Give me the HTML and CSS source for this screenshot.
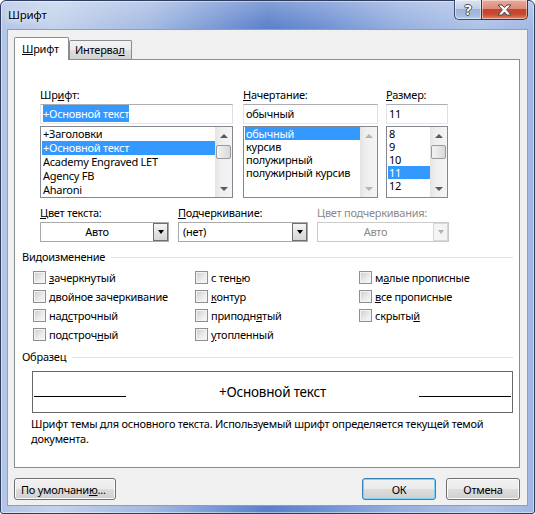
FILE: index.html
```html
<!DOCTYPE html>
<html lang="ru">
<head>
  <meta charset="UTF-8">
  <title>Шрифт</title>
  <link rel="stylesheet" href="styles.css">
</head>
<body>
  <div class="window">
    <div class="titlebar">
      <span class="title">Шрифт</span>
      <div class="caption-buttons">
        <div class="cap-btn help"><span class="help-glyph">?</span></div>
        <div class="cap-btn close">
          <svg width="15" height="12" viewBox="0 0 15 12">
            <polygon points="1,1 5,1 7.5,3.6 10,1 14,1 9.6,5.8 14,11 10,11 7.5,8 5,11 1,11 5.4,5.8" fill="#fff" stroke="#4a4a4a" stroke-width="1" stroke-linejoin="round"/>
          </svg>
        </div>
      </div>
    </div>

    <div class="client">
      <div class="tabs">
        <div class="tab active"><u>Ш</u>рифт</div>
        <div class="tab">Интерва<u>л</u></div>
      </div>

      <div class="panel">
        <!-- font / style / size -->
        <div class="pickers">
          <div class="picker picker-font">
            <label>Шр<u>и</u>фт:</label>
            <div class="field"><span class="sel">+Основной текст</span></div>
            <div class="listbox">
              <ul>
                <li>+Заголовки</li>
                <li class="selected">+Основной текст</li>
                <li>Academy Engraved LET</li>
                <li>Agency FB</li>
                <li>Aharoni</li>
              </ul>
              <div class="scrollbar">
                <div class="sb-btn"><span class="arrow-up"></span></div>
                <div class="thumb"></div>
                <div class="sb-track"></div>
                <div class="sb-btn"><span class="arrow-down"></span></div>
              </div>
            </div>
          </div>

          <div class="picker picker-style">
            <label><u>Н</u>ачертание:</label>
            <div class="field">обычный</div>
            <div class="listbox rows13">
              <ul>
                <li class="selected">обычный</li>
                <li>курсив</li>
                <li>полужирный</li>
                <li>полужирный курсив</li>
              </ul>
              <div class="scrollbar disabled">
                <div class="sb-btn"><span class="arrow-up"></span></div>
                <div class="sb-track"></div>
                <div class="sb-btn"><span class="arrow-down"></span></div>
              </div>
            </div>
          </div>

          <div class="picker picker-size">
            <label><u>Р</u>азмер:</label>
            <div class="field">11</div>
            <div class="listbox rows13">
              <ul>
                <li>8</li>
                <li>9</li>
                <li>10</li>
                <li class="selected">11</li>
                <li>12</li>
              </ul>
              <div class="scrollbar">
                <div class="sb-btn"><span class="arrow-up"></span></div>
                <div class="thumb"></div>
                <div class="sb-track"></div>
                <div class="sb-btn"><span class="arrow-down"></span></div>
              </div>
            </div>
          </div>
        </div>

        <!-- colours -->
        <div class="colors">
          <div>
            <label><u>Ц</u>вет текста:</label>
            <div class="combo">
              <span class="combo-value">Авто</span>
              <span class="combo-btn"><span class="arrow-down"></span></span>
            </div>
          </div>
          <div>
            <label><u>П</u>одчеркивание:</label>
            <div class="combo combo-left">
              <span class="combo-value">(нет)</span>
              <span class="combo-btn"><span class="arrow-down"></span></span>
            </div>
          </div>
          <div class="is-disabled">
            <label>Цвет подчеркивания:</label>
            <div class="combo">
              <span class="combo-value">Авто</span>
              <span class="combo-btn"><span class="arrow-down"></span></span>
            </div>
          </div>
        </div>

        <div class="group-title">Видоизменение</div>
        <div class="effects">
          <div class="check"><span class="box"></span><span><u>з</u>ачеркнутый</span></div>
          <div class="check"><span class="box"></span><span><u>д</u>войное зачеркивание</span></div>
          <div class="check"><span class="box"></span><span>над<u>с</u>трочный</span></div>
          <div class="check"><span class="box"></span><span>подстроч<u>н</u>ый</span></div>
          <div class="check"><span class="box"></span><span>с тен<u>ь</u>ю</span></div>
          <div class="check"><span class="box"></span><span><u>к</u>онтур</span></div>
          <div class="check"><span class="box"></span><span>приподн<u>я</u>тый</span></div>
          <div class="check"><span class="box"></span><span><u>у</u>топленный</span></div>
          <div class="check"><span class="box"></span><span>м<u>а</u>лые прописные</span></div>
          <div class="check"><span class="box"></span><span><u>в</u>се прописные</span></div>
          <div class="check"><span class="box"></span><span>скрыты<u>й</u></span></div>
        </div>

        <div class="group-title sample-title">Образец</div>
        <div class="preview">
          <span class="preview-line"></span>
          <span class="preview-text">+Основной текст</span>
          <span class="preview-line"></span>
        </div>
        <p class="description">Шрифт темы для основного текста. Используемый шрифт определяется текущей темой документа.</p>
      </div>

      <div class="footer">
        <button class="btn btn-wide">По умолчани<u>ю</u>...</button>
        <button class="btn btn-default">ОК</button>
        <button class="btn">Отмена</button>
      </div>
    </div>
  </div>
</body>
</html>
```

FILE: styles.css
```css
* {
  box-sizing: border-box;
}
html, body {
  margin: 0;
  padding: 0;
  background: #fff;
}
body {
  font-family: "Noto Sans", "Segoe UI", sans-serif;
  font-size: 11px;
  letter-spacing: -0.25px;
  color: #000;
}
u {
  text-underline-offset: 1px;
}

/* window frame */
.window {
  width: 535px;
  height: 514px;
  display: flex;
  flex-direction: column;
  border: 1px solid #2f3e5e;
  border-radius: 6px 6px 3px 3px;
  background:
    linear-gradient(to bottom, rgba(255, 255, 255, 0.25), rgba(255, 255, 255, 0) 28px),
    linear-gradient(to right, #b2c5e6 0%, #c3d2ec 10%, #a3b9e2 28%, #7494d3 42%, #5a80c9 50%, #6e90d2 60%, #97b0e0 75%, #afc3e8 90%, #9fb7e3 100%);
  box-shadow: inset 0 0 0 1px rgba(255, 255, 255, 0.45);
}
.titlebar {
  height: 28px;
  display: flex;
  justify-content: space-between;
  align-items: flex-start;
  padding-left: 7px;
}
.title {
  line-height: 28px;
  font-size: 11.5px;
  text-shadow: 0 0 6px rgba(255, 255, 255, 0.9), 0 0 10px rgba(255, 255, 255, 0.7);
}
.caption-buttons {
  display: flex;
  margin: -1px 6px 0 0;
}
.cap-btn {
  height: 20px;
  display: flex;
  align-items: center;
  justify-content: center;
  border: 1px solid #3a4c70;
  border-top: none;
  box-shadow: inset 0 0 0 1px rgba(255, 255, 255, 0.45);
}
.help {
  width: 27px;
  border-right: none;
  border-radius: 0 0 0 5px;
  background: linear-gradient(#dce5f3, #c0cfe8 45%, #9fb3d8 50%, #a9bde3 85%, #bcd0ee);
}
.help-glyph {
  color: #fff;
  font-weight: bold;
  font-size: 14px;
  line-height: 14px;
  text-shadow: -1px 0 #4a4a4a, 1px 0 #4a4a4a, 0 -1px #4a4a4a, 0 1px #4a4a4a;
}
.close {
  width: 47px;
  border-radius: 0 0 5px 0;
  border-color: #5b2a23;
  background: linear-gradient(#eaaa9b, #dc8c7a 45%, #c5452d 50%, #c9492f 75%, #e0866a);
}

/* client area */
.client {
  flex: 1;
  margin: 0 6px 7px;
  display: flex;
  flex-direction: column;
  padding: 7px 7px 5px 6px;
  border: 1px solid #8c9fc2;
  background: #f0f0f0;
}
.tabs {
  height: 22px;
  display: flex;
  align-items: flex-end;
}
.tab {
  width: 63px;
  height: 19px;
  line-height: 17px;
  padding-left: 5px;
  border: 1px solid #898c95;
  border-bottom: none;
  border-radius: 2px 2px 0 0;
  background: linear-gradient(#f3f3f3, #ebebeb 50%, #dedede 50%, #d2d2d2);
}
.tab.active {
  width: 55px;
  height: 23px;
  line-height: 22px;
  padding-left: 7px;
  margin-bottom: -1px;
  position: relative;
  z-index: 1;
  background: #fff;
}
.panel {
  height: 409px;
  padding: 0 6px 0 7px;
  border: 1px solid #898c95;
  background: #fff;
}

/* font pickers */
label {
  display: block;
  line-height: 14px;
  white-space: nowrap;
}
.pickers {
  display: flex;
  margin: 28px 0 0 18px;
}
.picker-font {
  width: 193px;
}
.picker-style {
  width: 135px;
  margin-left: 10px;
}
.picker-size {
  width: 62px;
  margin-left: 8px;
}
.field {
  height: 20px;
  margin-top: 2px;
  padding-left: 2px;
  line-height: 18px;
  border: 1px solid;
  border-color: #abadb3 #dbdfe6 #e3e9ef #e2e3ea;
  background: #fff;
}
.field .sel {
  background: #3399ff;
  color: #fff;
  padding: 1px 0;
}
.listbox {
  height: 72px;
  margin-top: 2px;
  display: flex;
  border: 1px solid #828790;
  background: #fff;
}
.listbox ul {
  flex: 1;
  min-width: 0;
  margin: 0;
  padding: 0 0 0 1px;
  list-style: none;
  overflow: hidden;
}
.listbox li {
  height: 14px;
  line-height: 14px;
  padding-left: 1px;
  white-space: nowrap;
}
.rows13 li {
  height: 13px;
  line-height: 13px;
}
.listbox li.selected {
  background: #3399ff;
  color: #fff;
}
.scrollbar {
  width: 17px;
  flex: none;
  display: flex;
  flex-direction: column;
  background: linear-gradient(to right, #e3e3e3, #eeeeee 30%, #f4f4f4);
}
.sb-btn {
  height: 17px;
  display: flex;
  align-items: center;
  justify-content: center;
}
.sb-track {
  flex: 1;
}
.thumb {
  height: 14px;
  margin: 1px 1px 0;
  border: 1px solid #9a9a9a;
  border-radius: 2px;
  background: linear-gradient(to right, #f4f4f4, #e6e6e6 50%, #d8d8d8);
}
.arrow-up,
.arrow-down {
  width: 0;
  height: 0;
  border-left: 4px solid transparent;
  border-right: 4px solid transparent;
}
.arrow-up {
  border-bottom: 4px solid #5a5a5a;
}
.arrow-down {
  border-top: 4px solid #5a5a5a;
}
.scrollbar.disabled .arrow-up {
  border-bottom-color: #b4b4b4;
}
.scrollbar.disabled .arrow-down {
  border-top-color: #b4b4b4;
}

/* colour combos */
.colors {
  display: grid;
  grid-template-columns: 129px 130px 132px;
  column-gap: 9px;
  margin: 8px 0 0 18px;
}
.combo {
  height: 20px;
  margin-top: 2px;
  display: flex;
  border: 1px solid #a9a9a9;
  background: #fff;
}
.combo-value {
  flex: 1;
  line-height: 18px;
  text-align: center;
}
.combo-left .combo-value {
  text-align: left;
  padding-left: 4px;
}
.combo-btn {
  width: 15px;
  display: flex;
  align-items: center;
  justify-content: center;
  border: 1px solid #6f6f6f;
  background: linear-gradient(#f6f6f6, #e4e4e4 50%, #d6d6d6);
}
.combo-btn .arrow-down {
  border-left-width: 3.5px;
  border-right-width: 3.5px;
  border-top: 4px solid #000;
}
.is-disabled label,
.is-disabled .combo-value {
  color: #8a8a8a;
}
.is-disabled .combo {
  border-color: #cacaca;
}
.is-disabled .combo-btn {
  border-color: #d6d6d6;
  background: #f4f4f4;
}
.is-disabled .combo-btn .arrow-down {
  border-top-color: #b0b0b0;
}

/* groups */
.group-title {
  display: flex;
  align-items: center;
  line-height: 14px;
  margin-top: 8px;
}
.group-title::after {
  content: "";
  flex: 1;
  margin-left: 6px;
  border-top: 1px solid #dbe1e8;
}
.sample-title {
  margin-top: 6px;
}
.effects {
  display: grid;
  grid-template-columns: 162px 164px auto;
  grid-template-rows: repeat(4, 19px);
  grid-auto-flow: column;
  margin: 4px 0 0 11px;
}
.check {
  display: flex;
  align-items: center;
  white-space: nowrap;
}
.box {
  width: 13px;
  height: 13px;
  margin-right: 3px;
  border: 1px solid #8e8f8f;
  background: linear-gradient(135deg, #cbcbcb, #ececec 60%, #f7f7f7);
  box-shadow: inset 0 0 0 1px #f3f3f3;
}

/* sample */
.preview {
  width: 481px;
  height: 42px;
  margin: 7px 0 0 10px;
  padding: 0 1px;
  display: flex;
  align-items: center;
  border: 1px solid #696969;
}
.preview-line {
  width: 92px;
  margin-top: 9px;
  border-top: 1px solid #000;
}
.preview-text {
  flex: 1;
  text-align: center;
  font-size: 13.5px;
  letter-spacing: -0.2px;
}
.description {
  width: 478px;
  margin: 3px 0 0 9px;
  line-height: 15px;
}

/* buttons */
.footer {
  display: flex;
  margin-top: 10px;
}
.btn {
  width: 74px;
  height: 22px;
  padding: 0;
  font: inherit;
  letter-spacing: inherit;
  color: #000;
  border: 1px solid #707070;
  border-radius: 3px;
  background: linear-gradient(#f2f2f2, #ebebeb 50%, #dddddd 50%, #cfcfcf);
  box-shadow: inset 0 0 0 1px #fbfbfb;
}
.btn-wide {
  width: 102px;
  margin-right: auto;
  text-align: left;
  padding-left: 6px;
}
.btn-default {
  margin-right: 10px;
  border-color: #3c7fb1;
  box-shadow: inset 0 0 0 1px #7fd1f5;
}
```
